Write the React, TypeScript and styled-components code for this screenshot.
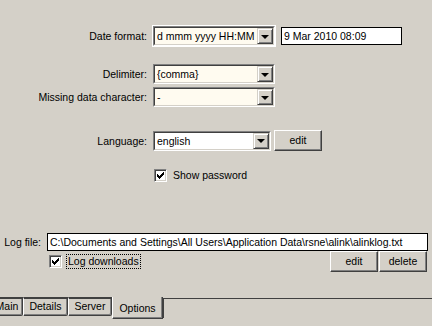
import styled, { createGlobalStyle } from 'styled-components';

const Global = createGlobalStyle`
  html, body {
    margin: 0;
    padding: 0;
    background: #d4d0c8;
  }
  body {
    font-family: 'Liberation Sans', Arial, sans-serif;
    font-size: 10.5px;
    color: #000;
  }
`;

const Page = styled.div`
  width: 432px;
  height: 326px;
  overflow: hidden;
  display: flex;
  flex-direction: column;
  padding-top: 25px;
  box-sizing: border-box;
  background: #d4d0c8;
`;

const Row = styled.div<{ $top: number; $height?: number }>`
  display: flex;
  align-items: center;
  margin-top: ${(p) => p.$top}px;
  height: ${(p) => p.$height ?? 20}px;
`;

const Label = styled.div<{ $width?: number }>`
  width: ${(p) => p.$width ?? 153}px;
  text-align: right;
  padding-right: 6px;
  box-sizing: border-box;
  white-space: nowrap;
`;

const Focus = styled.div`
  border: 1px solid #fff;
  margin-left: -1px;
`;

const Combo = styled.div<{ $width: number }>`
  width: ${(p) => p.$width}px;
  height: 20px;
  box-sizing: border-box;
  border-style: solid;
  border-width: 1px;
  border-color: #808080 #fff #fff #808080;
  display: flex;
`;

const ComboInner = styled.div<{ $bg?: string }>`
  flex: 1;
  display: flex;
  align-items: center;
  border-style: solid;
  border-width: 1px;
  border-color: #404040 #d4d0c8 #d4d0c8 #404040;
  background: ${(p) => p.$bg ?? '#fff'};
  padding-left: 2px;
  overflow: hidden;
`;

const ComboText = styled.span`
  flex: 1;
  white-space: nowrap;
  overflow: hidden;
`;

const DropButton = styled.div`
  width: 16px;
  height: 16px;
  box-sizing: border-box;
  background: #d4d0c8;
  border-style: solid;
  border-width: 1px;
  border-color: #d4d0c8 #404040 #404040 #d4d0c8;
  box-shadow: inset 1px 1px 0 #fff, inset -1px -1px 0 #808080;
  display: flex;
  align-items: center;
  justify-content: center;
`;

const Arrow = styled.div`
  width: 0;
  height: 0;
  border-left: 4px solid transparent;
  border-right: 4px solid transparent;
  border-top: 4px solid #000;
  margin-top: 1px;
`;

const TextBox = styled.div<{ $width: number; $left: number }>`
  width: ${(p) => p.$width}px;
  height: 18px;
  margin-left: ${(p) => p.$left}px;
  box-sizing: border-box;
  border: 1px solid #000;
  background: #fff;
  padding-left: 2px;
  display: flex;
  align-items: center;
  white-space: nowrap;
  overflow: hidden;
`;

const Button = styled.div<{ $left?: number }>`
  width: 48px;
  height: 21px;
  margin-left: ${(p) => p.$left ?? 0}px;
  box-sizing: border-box;
  border-style: solid;
  border-width: 1px;
  border-color: #fff #404040 #404040 #fff;
  box-shadow: inset -1px -1px 0 #808080;
  display: flex;
  align-items: center;
  justify-content: center;
  padding-bottom: 1px;
`;

const CheckRow = styled.div<{ $left: number }>`
  display: flex;
  align-items: center;
  margin-left: ${(p) => p.$left}px;
`;

const Box = styled.div`
  width: 13px;
  height: 13px;
  box-sizing: border-box;
  border-style: solid;
  border-width: 1px;
  border-color: #808080 #fff #fff #808080;
  box-shadow: inset 1px 1px 0 #404040, inset -1px -1px 0 #d4d0c8;
  background: #fff;
  display: flex;
  align-items: center;
  justify-content: center;
`;

const CheckLabel = styled.span<{ $focus?: boolean }>`
  margin-left: 4px;
  padding: 0 1px;
  border: 1px dotted ${(p) => (p.$focus ? '#000' : 'transparent')};
  line-height: 13px;
`;

const Spacer = styled.div<{ $width?: number }>`
  flex: ${(p) => (p.$width ? `0 0 ${p.$width}px` : '1')};
`;

const Tabs = styled.div`
  margin-top: 25px;
  display: flex;
  align-items: flex-start;
  margin-left: -9px;
`;

const Tab = styled.div<{ $width: number }>`
  width: ${(p) => p.$width}px;
  height: 19px;
  box-sizing: border-box;
  border-top: 2px solid #404040;
  border-left: 1px solid #fff;
  border-right: 1px solid #404040;
  border-bottom: 1px solid #404040;
  box-shadow: inset -1px -1px 0 #808080;
  border-bottom-right-radius: 2px;
  display: flex;
  align-items: center;
  justify-content: center;
  padding-bottom: 2px;
`;

const ActiveTab = styled.div<{ $width: number }>`
  width: ${(p) => p.$width}px;
  height: 22px;
  box-sizing: border-box;
  border-left: 1px solid #fff;
  border-right: 1px solid #404040;
  border-bottom: 1px solid #404040;
  box-shadow: inset -1px -1px 0 #808080;
  display: flex;
  align-items: center;
  justify-content: center;
  padding-top: 1px;
`;

const TabRest = styled.div`
  flex: 1;
  border-top: 1px solid #404040;
  border-left: 1px solid #404040;
  height: 20px;
  box-sizing: border-box;
  margin-top: 1px;
`;

const Check = () => (
  <svg width="7" height="7" viewBox="0 0 7 7">
    <path d="M0 2h1v1h1v1h1v-1h1v-1h1v-1h1v-1h1v3h-1v1h-1v1h-1v1h-1v1h-1v-1h-1v-1h-1z" fill="#000" />
  </svg>
);

const Select = ({ width, value, bg }: { width: number; value: string; bg?: string }) => (
  <Combo $width={width}>
    <ComboInner $bg={bg}>
      <ComboText>{value}</ComboText>
      <DropButton>
        <Arrow />
      </DropButton>
    </ComboInner>
  </Combo>
);

const cream = '#fffbf0';

export default function App() {
  return (
    <>
      <Global />
      <Page>
        <Row $top={0} $height={22}>
          <Label>Date format:</Label>
          <Focus>
            <Select width={122} value="d mmm yyyy HH:MM" bg={cream} />
          </Focus>
          <TextBox $width={121} $left={5}>9 Mar 2010 08:09</TextBox>
        </Row>
        <Row $top={17}>
          <Label>Delimiter:</Label>
          <Select width={122} value="{comma}" bg={cream} />
        </Row>
        <Row $top={3}>
          <Label>Missing data character:</Label>
          <Select width={122} value="-" bg={cream} />
        </Row>
        <Row $top={23} $height={21}>
          <Label>Language:</Label>
          <Select width={118} value="english" />
          <Button $left={3}>edit</Button>
        </Row>
        <Row $top={17} $height={15}>
          <CheckRow $left={154}>
            <Box>
              <Check />
            </Box>
            <CheckLabel>Show password</CheckLabel>
          </CheckRow>
        </Row>
        <Row $top={50} $height={18}>
          <Label $width={47}>Log file:</Label>
          <TextBox $width={381} $left={0}>
            C:\Documents and Settings\All Users\Application Data\rsne\alink\alinklog.txt
          </TextBox>
        </Row>
        <Row $top={0} $height={21}>
          <CheckRow $left={49}>
            <Box>
              <Check />
            </Box>
            <CheckLabel $focus>Log downloads</CheckLabel>
          </CheckRow>
          <Spacer />
          <Button>edit</Button>
          <Button $left={1}>delete</Button>
          <Spacer $width={5} />
        </Row>
        <Tabs>
          <Tab $width={32}>Main</Tab>
          <Tab $width={45}>Details</Tab>
          <Tab $width={44}>Server</Tab>
          <ActiveTab $width={51}>Options</ActiveTab>
          <TabRest />
        </Tabs>
      </Page>
    </>
  );
}
